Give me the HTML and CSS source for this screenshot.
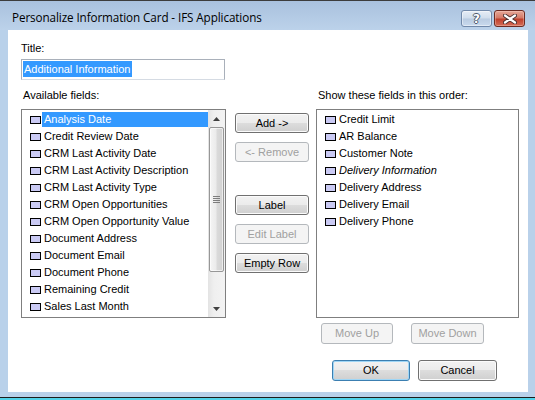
FILE: index.html
```html
<!DOCTYPE html>
<html>
<head>
<meta charset="utf-8">
<link rel="stylesheet" href="styles.css">
</head>
<body>
<div class="window">
  <div class="titlebar">
    <span class="caption">Personalize Information Card - IFS Applications</span>
    <div class="caption-buttons">
      <div class="cbtn help"><span class="help-glyph">?</span></div>
      <div class="cbtn close">
        <svg width="14" height="10" viewBox="0 0 14 10">
          <path d="M2 1.5 L12 8.5 M12 1.5 L2 8.5" stroke="#4a3030" stroke-width="4" stroke-linecap="round"/>
          <path d="M2 1.5 L12 8.5 M12 1.5 L2 8.5" stroke="#ffffff" stroke-width="2.2" stroke-linecap="round"/>
        </svg>
      </div>
    </div>
  </div>
  <div class="frame">
    <div class="client">
      <div class="field-label">Title:</div>
      <div class="title-input"><span class="selection">Additional Information</span></div>

      <div class="columns">
        <div class="col col-left">
          <div class="col-label">Available fields:</div>
          <div class="listbox">
            <div class="items">
              <div class="item selected"><span class="chk"></span><span class="item-text">Analysis Date</span></div>
              <div class="item"><span class="chk"></span><span class="item-text">Credit Review Date</span></div>
              <div class="item"><span class="chk"></span><span class="item-text">CRM Last Activity Date</span></div>
              <div class="item"><span class="chk"></span><span class="item-text">CRM Last Activity Description</span></div>
              <div class="item"><span class="chk"></span><span class="item-text">CRM Last Activity Type</span></div>
              <div class="item"><span class="chk"></span><span class="item-text">CRM Open Opportunities</span></div>
              <div class="item"><span class="chk"></span><span class="item-text">CRM Open Opportunity Value</span></div>
              <div class="item"><span class="chk"></span><span class="item-text">Document Address</span></div>
              <div class="item"><span class="chk"></span><span class="item-text">Document Email</span></div>
              <div class="item"><span class="chk"></span><span class="item-text">Document Phone</span></div>
              <div class="item"><span class="chk"></span><span class="item-text">Remaining Credit</span></div>
              <div class="item"><span class="chk"></span><span class="item-text">Sales Last Month</span></div>
            </div>
            <div class="scrollbar">
              <div class="sb-arrow">
                <svg width="7" height="4" viewBox="0 0 7 4"><polygon points="0,4 3.5,0 7,4" fill="#404040"/></svg>
              </div>
              <div class="sb-thumb">
                <svg width="7" height="7" viewBox="0 0 7 7">
                  <path d="M0 0.5 H7 M0 2.5 H7 M0 4.5 H7 M0 6.5 H7" stroke="#7d7d7d" stroke-width="1"/>
                </svg>
              </div>
              <div class="sb-track"></div>
              <div class="sb-arrow">
                <svg width="7" height="4" viewBox="0 0 7 4"><polygon points="0,0 7,0 3.5,4" fill="#404040"/></svg>
              </div>
            </div>
          </div>
        </div>

        <div class="col col-mid">
          <button class="btn mid">Add -&gt;</button>
          <button class="btn mid disabled gap-s">&lt;- Remove</button>
          <button class="btn mid gap-l">Label</button>
          <button class="btn mid disabled gap-s">Edit Label</button>
          <button class="btn mid gap-s">Empty Row</button>
        </div>

        <div class="col col-right">
          <div class="col-label">Show these fields in this order:</div>
          <div class="listbox">
            <div class="items">
              <div class="item"><span class="chk"></span><span class="item-text">Credit Limit</span></div>
              <div class="item"><span class="chk"></span><span class="item-text">AR Balance</span></div>
              <div class="item"><span class="chk"></span><span class="item-text">Customer Note</span></div>
              <div class="item"><span class="chk"></span><span class="item-text italic">Delivery Information</span></div>
              <div class="item"><span class="chk"></span><span class="item-text">Delivery Address</span></div>
              <div class="item"><span class="chk"></span><span class="item-text">Delivery Email</span></div>
              <div class="item"><span class="chk"></span><span class="item-text">Delivery Phone</span></div>
            </div>
          </div>
          <div class="move-row">
            <button class="btn disabled move-up">Move Up</button>
            <button class="btn disabled move-down">Move Down</button>
          </div>
        </div>
      </div>

      <div class="dialog-buttons">
        <button class="btn default ok">OK</button>
        <button class="btn cancel">Cancel</button>
      </div>
    </div>
  </div>
</div>
</body>
</html>
```
FILE: styles.css
```css
* {
  box-sizing: border-box;
}

body {
  margin: 0;
  font-family: "Liberation Sans", Arial, sans-serif;
  font-size: 11px;
  color: #000;
}

.window {
  width: 535px;
  height: 400px;
  display: flex;
  flex-direction: column;
  background: #b9d1ea;
  box-shadow: inset 0 -2px 0 #52d2e8, inset 0 -3px 0 #1c1c1c;
}

.titlebar {
  height: 30px;
  flex: none;
  display: flex;
  align-items: flex-start;
  border-top: 1px solid #3c3c3c;
  background: linear-gradient(#a9c1de, #bcd2ea);
}

.caption {
  font-family: "Open Sans", "Noto Sans", sans-serif;
  font-size: 11.7px;
  line-height: 15px;
  margin-top: 9px;
  margin-left: 12px;
  color: #000;
  letter-spacing: -0.1px;
}

.caption-buttons {
  margin-left: auto;
  margin-right: 10px;
  margin-top: 9px;
  display: flex;
  gap: 2px;
}

.cbtn {
  width: 31px;
  height: 17px;
  border-radius: 3px;
  display: flex;
  align-items: center;
  justify-content: center;
}

.help {
  border: 1px solid #7189aa;
  background: linear-gradient(#e6edf6, #d0ddec 48%, #b9cbe1 52%, #c9daee);
  box-shadow: inset 0 0 0 1px rgba(255, 255, 255, 0.45);
}

.help-glyph {
  font-family: "DejaVu Sans", sans-serif;
  font-weight: bold;
  font-size: 12px;
  line-height: 12px;
  color: #fff;
  text-shadow: 1px 0 0 #4d5a6c, -1px 0 0 #4d5a6c, 0 1px 0 #4d5a6c, 0 -1px 0 #4d5a6c;
}

.close {
  border: 1px solid #6c2b22;
  background: linear-gradient(#e7a898, #d47a68 45%, #c0402c 55%, #d56e58);
  box-shadow: inset 0 0 0 1px rgba(255, 220, 210, 0.35);
}

.frame {
  flex: 1;
  padding: 0 7px 8px 8px;
}

.client {
  height: 362px;
  background: #fff;
  padding: 12px 0 0 13px;
}

.field-label {
  line-height: 13px;
  height: 13px;
}

.title-input {
  width: 204px;
  height: 21px;
  margin-top: 4px;
  border: 1px solid #a9b0ba;
  border-bottom-color: #d5dbe3;
  padding: 1px;
}

.selection {
  display: inline-block;
  background: #3399ff;
  color: #fff;
  line-height: 16px;
  height: 16px;
  padding: 0 2px 0 1px;
}

.columns {
  display: flex;
  margin-top: 9px;
}

.col {
  display: flex;
  flex-direction: column;
}

.col-left {
  width: 205px;
}

.col-mid {
  width: 74px;
  margin-left: 9px;
  padding-top: 24px;
}

.col-right {
  width: 203px;
  margin-left: 7px;
}

.col-label {
  line-height: 13px;
  height: 13px;
  padding-left: 2px;
  margin-bottom: 7px;
}

.listbox {
  height: 209px;
  border: 1px solid #7f7f7f;
  background: #fff;
  display: flex;
}

.items {
  flex: 1;
  display: flex;
  flex-direction: column;
  padding-top: 1px;
}

.item {
  height: 17px;
  flex: none;
  display: flex;
  align-items: center;
  padding-left: 8px;
}

.chk {
  width: 11px;
  height: 8px;
  flex: none;
  border: 1px solid #000;
  background: #cacaf4;
  margin-right: 1px;
}

.item-text {
  flex: 1;
  height: 15px;
  line-height: 15px;
  padding: 0 2px;
  white-space: nowrap;
}

.italic {
  font-style: italic;
}

.selected .item-text {
  background: #3399ff;
  color: #fff;
}

.scrollbar {
  width: 17px;
  flex: none;
  display: flex;
  flex-direction: column;
  background: linear-gradient(to right, #e3e3e3, #efefef 35%, #f3f3f3);
}

.sb-arrow {
  height: 17px;
  flex: none;
  display: flex;
  align-items: center;
  justify-content: center;
}

.sb-thumb {
  height: 145px;
  flex: none;
  margin: 0 1px 0 1px;
  border: 1px solid #979797;
  border-radius: 2px;
  background: linear-gradient(to right, #f5f5f5, #ebebeb 45%, #dadada 55%, #d2d2d2);
  box-shadow: inset 0 0 0 1px rgba(255, 255, 255, 0.6);
  display: flex;
  align-items: center;
  justify-content: center;
}

.sb-track {
  flex: 1;
}

.btn {
  appearance: none;
  margin: 0;
  padding: 0;
  font-family: inherit;
  font-size: 11px;
  color: #000;
  border: 1px solid #707070;
  border-radius: 3px;
  background: linear-gradient(#f2f2f2, #ebebeb 50%, #dddddd 50%, #cfcfcf);
  box-shadow: inset 0 0 0 1px #fbfbfb;
  display: flex;
  align-items: center;
  justify-content: center;
  line-height: 13px;
}

.btn.disabled {
  border-color: #b4b8bc;
  background: #f4f4f4;
  box-shadow: none;
  color: #a0a0a0;
}

.btn.default {
  border-color: #3c7fb1;
  box-shadow: inset 0 0 0 1px #9fd6f6;
}

.mid {
  width: 74px;
  height: 20px;
}

.gap-s {
  margin-top: 9px;
}

.gap-l {
  margin-top: 33px;
}

.move-row {
  display: flex;
  margin-top: 5px;
  padding-left: 5px;
  gap: 18px;
}

.move-up {
  width: 72px;
  height: 21px;
}

.move-down {
  width: 73px;
  height: 21px;
}

.dialog-buttons {
  display: flex;
  justify-content: flex-end;
  gap: 8px;
  padding-right: 31px;
  margin-top: 16px;
}

.ok {
  width: 78px;
  height: 21px;
}

.cancel {
  width: 79px;
  height: 21px;
}
```
